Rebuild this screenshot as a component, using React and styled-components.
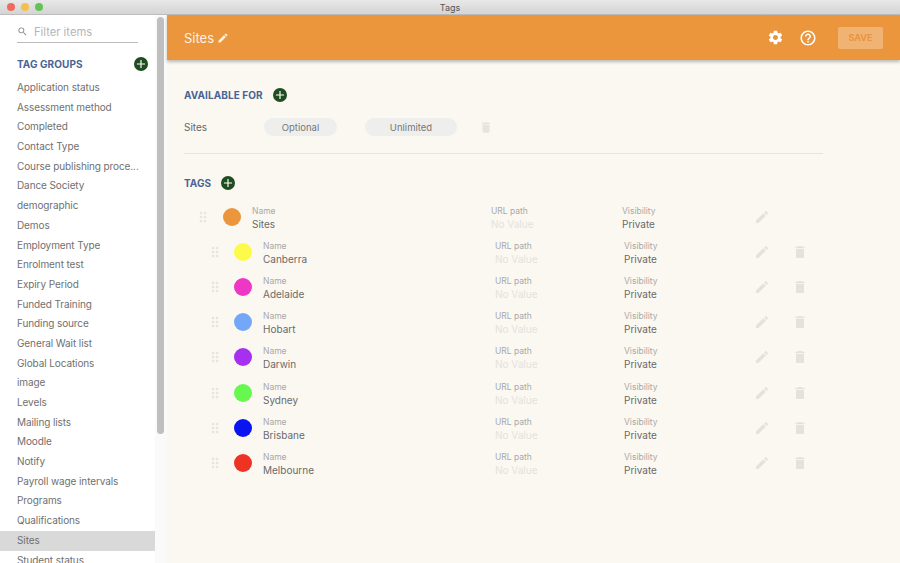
import React from 'react';
import styled, {createGlobalStyle} from 'styled-components';
import {MdAdd, MdDelete, MdDragIndicator, MdEdit, MdHelpOutline, MdSearch, MdSettings} from 'react-icons/md';

const GlobalStyle = createGlobalStyle`
    html, body {
        margin: 0;
        padding: 0;
        height: 563px;
        overflow: hidden;
    }
    body {
        font-family: Inter, "Liberation Sans", sans-serif;
        color: #555;
    }
    * {
        box-sizing: border-box;
    }
`

const Window = styled.div`
    width: 900px;
    height: 563px;
    display: flex;
    flex-direction: column;
    overflow: hidden;
`

const TitleBar = styled.div`
    flex: 0 0 15px;
    display: grid;
    grid-template-columns: 1fr auto 1fr;
    align-items: center;
    padding: 0 7px;
    background: linear-gradient(#e8e8e8, #d4d4d4);
    border-bottom: 1px solid #bdbdbd;
`

const Lights = styled.div`
    display: flex;
    gap: 6px;
`

const Light = styled.span`
    width: 8px;
    height: 8px;
    border-radius: 50%;
    background: ${p => p.$color};
`

const WindowTitle = styled.div`
    font-size: 9px;
    color: #555;
`

const Body = styled.div`
    flex: 1;
    display: flex;
    min-height: 0;
`

const Sidebar = styled.aside`
    width: 155px;
    background: #fff;
    overflow: hidden;
    flex-shrink: 0;
`

const FilterBox = styled.div`
    display: flex;
    align-items: center;
    gap: 6px;
    width: 121px;
    height: 28px;
    margin: 0 0 0 17px;
    padding-top: 6px;
    border-bottom: 1px solid #bbb;
    color: #888;
`

const FilterText = styled.span`
    font-size: 11.2px;
    color: #b5b5b5;
`

const GroupsHead = styled.div`
    display: flex;
    align-items: center;
    justify-content: space-between;
    margin: 13px 7px 0 17px;
    height: 16px;
`

const SectionTitle = styled.h2`
    margin: 0;
    font-size: 10px;
    font-weight: 700;
    letter-spacing: 0.08px;
    line-height: 16px;
    color: #4a6394;
`

const AddButton = styled.span`
    width: 14px;
    height: 14px;
    margin-top: -1px;
    flex-shrink: 0;
    border-radius: 50%;
    background: #1f4d1f;
    color: #fff;
    display: flex;
    align-items: center;
    justify-content: center;
    font-size: 14px;
`

const GroupList = styled.ul`
    list-style: none;
    margin: 6px 0 0;
    padding: 0;
`

const GroupItem = styled.li`
    height: 19.7px;
    line-height: 19.7px;
    padding-left: 17px;
    font-size: 10px;
    letter-spacing: -0.1px;
    color: #707070;
    white-space: nowrap;
    background: ${p => (p.$active ? '#d9d9d9' : 'transparent')};
`

const ScrollTrack = styled.div`
    width: 12px;
    flex-shrink: 0;
    background: #fafafa;
    padding: 2px 3px 0 2px;
`

const ScrollThumb = styled.div`
    height: 417px;
    border-radius: 4px;
    background: #bfbfbf;
`

const Main = styled.main`
    flex: 1;
    display: flex;
    flex-direction: column;
    background: #fbf8f2;
    min-width: 0;
`

const Header = styled.header`
    flex: 0 0 45px;
    display: flex;
    align-items: center;
    padding: 0 17px;
    background: #eb963c;
    color: #fff;
    box-shadow: 0 2px 3px rgba(0, 0, 0, 0.25);
`

const HeaderTitle = styled.div`
    display: flex;
    align-items: center;
    gap: 3px;
    font-size: 13px;
    flex: 1;
    color: #fdf1e2;
`

const HeaderIcon = styled.span`
    display: flex;
    font-size: ${p => p.$size}px;
    margin-right: ${p => p.$gap}px;
`

const SaveButton = styled.span`
    width: 45px;
    height: 22px;
    border-radius: 2px;
    display: flex;
    align-items: center;
    justify-content: center;
    font-size: 9px;
    font-weight: 700;
    color: #e8963f;
    background: #f1b374;
`

const Content = styled.div`
    padding: 27px 0 0 17px;
`

const SectionHead = styled.div`
    display: flex;
    align-items: center;
    gap: 10px;
    height: 16px;
`

const AvailableRow = styled.div`
    display: grid;
    grid-template-columns: 80px 73px 28px 92px 22px 14px;
    align-items: center;
    margin-top: 15px;
    height: 18px;
    font-size: 10px;
    color: #666;
`

const Pill = styled.span`
    height: 18px;
    border-radius: 9px;
    background: #eeeeec;
    display: flex;
    align-items: center;
    justify-content: center;
    color: #777;
    font-size: 9.5px;
    grid-column: ${p => p.$col};
`

const TrashIcon = styled.span`
    grid-column: 6;
    display: flex;
    font-size: 15px;
    color: #e6e4df;
`

const Divider = styled.hr`
    width: 639px;
    margin: 17px 0 21px;
    border: 0;
    border-top: 1px solid #e6e4de;
`

const TagList = styled.div`
    margin-top: 10px;
`

const TagRow = styled.div`
    display: grid;
    grid-template-columns: ${p => (p.$child ? '23px 29px 232px 129px 128px 38px 20px' : '24px 29px 239px 131px 130px 38px 20px')};
    align-items: center;
    height: 35.2px;
    margin-left: ${p => (p.$child ? 27 : 15)}px;
`

const Handle = styled.span`
    display: flex;
    font-size: 16px;
    margin: 0 0 4px -4px;
    color: #e6e4df;
`

const Dot = styled.span`
    width: 18px;
    height: 18px;
    margin-bottom: 4px;
    border-radius: 50%;
    background: ${p => p.$color};
`

const Cell = styled.div`
    display: flex;
    flex-direction: column;
    padding-bottom: 2px;
`

const CellLabel = styled.span`
    font-size: 8.5px;
    line-height: 13px;
    color: #a8a8a8;
`

const CellValue = styled.span`
    margin-top: -1px;
    font-size: 10px;
    line-height: 14px;
    color: ${p => (p.$empty ? '#e4e2dd' : '#6a6a6a')};
`

const RowIcon = styled.span`
    display: flex;
    padding-left: 2px;
    margin-bottom: 4px;
    font-size: 16px;
    color: #e4e2dd;
`

const groups = [
    'Application status', 'Assessment method', 'Completed', 'Contact Type',
    'Course publishing proce...', 'Dance Society', 'demographic', 'Demos',
    'Employment Type', 'Enrolment test', 'Expiry Period', 'Funded Training',
    'Funding source', 'General Wait list', 'Global Locations', 'image', 'Levels',
    'Mailing lists', 'Moodle', 'Notify', 'Payroll wage intervals', 'Programs',
    'Qualifications', 'Sites', 'Student status',
];

const tags = [
    {name: 'Canberra', color: '#fdfb4a'},
    {name: 'Adelaide', color: '#ee37c4'},
    {name: 'Hobart', color: '#74a7f8'},
    {name: 'Darwin', color: '#a62ff0'},
    {name: 'Sydney', color: '#66f84f'},
    {name: 'Brisbane', color: '#0a14f0'},
    {name: 'Melbourne', color: '#ee3224'},
];

const Tag = ({name, color, child}) => (
    <TagRow $child={child}>
        <Handle><MdDragIndicator/></Handle>
        <Dot $color={color}/>
        <Cell>
            <CellLabel>Name</CellLabel>
            <CellValue>{name}</CellValue>
        </Cell>
        <Cell>
            <CellLabel>URL path</CellLabel>
            <CellValue $empty>No Value</CellValue>
        </Cell>
        <Cell>
            <CellLabel>Visibility</CellLabel>
            <CellValue>Private</CellValue>
        </Cell>
        <RowIcon><MdEdit/></RowIcon>
        {child && <RowIcon><MdDelete/></RowIcon>}
    </TagRow>
);

const App = () => (
    <Window>
        <GlobalStyle/>
        <TitleBar>
            <Lights>
                <Light $color="#ee6a5f"/>
                <Light $color="#f5bf4f"/>
                <Light $color="#61c554"/>
            </Lights>
            <WindowTitle>Tags</WindowTitle>
        </TitleBar>
        <Body>
            <Sidebar>
                <FilterBox>
                    <MdSearch size={11}/>
                    <FilterText>Filter items</FilterText>
                </FilterBox>
                <GroupsHead>
                    <SectionTitle>TAG GROUPS</SectionTitle>
                    <AddButton><MdAdd/></AddButton>
                </GroupsHead>
                <GroupList>
                    {groups.map(group => (
                        <GroupItem key={group} $active={group === 'Sites'}>{group}</GroupItem>
                    ))}
                </GroupList>
            </Sidebar>
            <ScrollTrack><ScrollThumb/></ScrollTrack>
            <Main>
                <Header>
                    <HeaderTitle>Sites <MdEdit size={12}/></HeaderTitle>
                    <HeaderIcon $size={17} $gap={15}><MdSettings/></HeaderIcon>
                    <HeaderIcon $size={18} $gap={21}><MdHelpOutline/></HeaderIcon>
                    <SaveButton>SAVE</SaveButton>
                </Header>
                <Content>
                    <SectionHead>
                        <SectionTitle>AVAILABLE FOR</SectionTitle>
                        <AddButton><MdAdd/></AddButton>
                    </SectionHead>
                    <AvailableRow>
                        <span>Sites</span>
                        <Pill $col={2}>Optional</Pill>
                        <Pill $col={4}>Unlimited</Pill>
                        <TrashIcon><MdDelete/></TrashIcon>
                    </AvailableRow>
                    <Divider/>
                    <SectionHead>
                        <SectionTitle>TAGS</SectionTitle>
                        <AddButton><MdAdd/></AddButton>
                    </SectionHead>
                    <TagList>
                        <Tag name="Sites" color="#eb963c"/>
                        {tags.map(tag => <Tag key={tag.name} child {...tag}/>)}
                    </TagList>
                </Content>
            </Main>
        </Body>
    </Window>
);

export default App;
